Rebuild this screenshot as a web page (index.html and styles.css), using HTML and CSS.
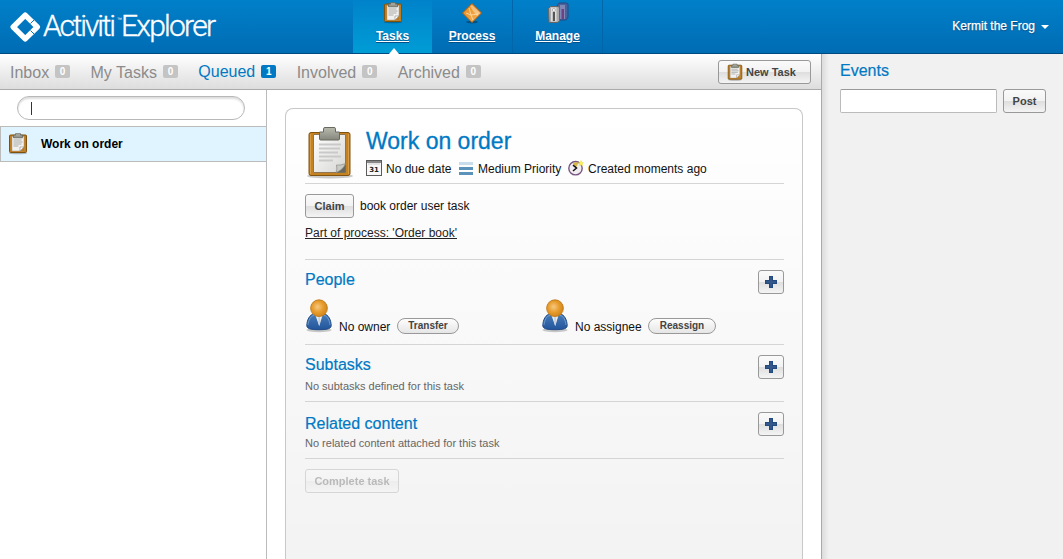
FILE: index.html
```html
<!DOCTYPE html>
<html lang="en">
<head>
<meta charset="utf-8">
<title>Activiti Explorer</title>
<link rel="stylesheet" href="styles.css">
</head>
<body>
<svg class="defs" width="0" height="0" aria-hidden="true">
  <defs>
    <linearGradient id="paper" x1="0" y1="0" x2="1" y2="1"><stop offset="0" stop-color="#fff"/><stop offset="1" stop-color="#d6d6d3"/></linearGradient>
    <linearGradient id="metal" x1="0" y1="0" x2="0" y2="1"><stop offset="0" stop-color="#b9baae"/><stop offset="1" stop-color="#85877d"/></linearGradient>
    <radialGradient id="head" cx=".42" cy=".42" r=".6"><stop offset="0" stop-color="#f7c882"/><stop offset=".55" stop-color="#e79c2c"/><stop offset="1" stop-color="#d0851b"/></radialGradient>
    <linearGradient id="suit" x1="0" y1="0" x2="0" y2="1"><stop offset="0" stop-color="#477db9"/><stop offset="1" stop-color="#23549b"/></linearGradient>
    <linearGradient id="gold" x1="0" y1="0" x2="1" y2="1"><stop offset="0" stop-color="#e98a16"/><stop offset="1" stop-color="#f4b45e"/></linearGradient>
    <symbol id="board" viewBox="0 0 20 22">
      <ellipse cx="10" cy="20.800" rx="9" ry="1" fill="#000" opacity=".25"/>
      <rect x="1.500" y="2.500" width="17" height="17.500" rx="1" fill="#c17d1d" stroke="#80510b"/>
      <path d="M4 4h12v14.500H4z" fill="#f1f1ef" stroke="#a49d90" stroke-width=".5"/>
      <path d="M5.500 7.500h8M5.500 9.500h9M5.500 11.500h8M5.500 13.500h5" stroke="#aaa" stroke-width="1"/>
      <path d="M16 14.500h-4v4z" fill="#fff" stroke="#888" stroke-width=".6"/><path d="M12.300 18.500h3.700v-3.700z" fill="#b87a22"/>
      <path d="M5.500 5.300V2.600h2V1.200h5v1.400h2v2.700z" fill="url(#metal)" stroke="#62645c" stroke-width=".8"/>
    </symbol>
    <symbol id="person" viewBox="0 0 26 34">
      <ellipse cx="13" cy="31" rx="12.500" ry="2.200" fill="#000" opacity=".2"/>
      <path d="M.8 26.500C1 21 3.500 15.500 8 15h10c4.500.5 7 6 7.200 11.500 0 3-3.200 4.200-12.200 4.200S.8 29.500.8 26.500z" fill="url(#suit)" stroke="#204a87" stroke-width="1"/>
      <path d="M2 26c.4-4.500 2.500-9 6-9.700M24 26c-.4-4.500-2.500-9-6-9.700" fill="none" stroke="#7da4d2" stroke-width=".8"/>
      <path d="M9.500 16.500h7L13.200 27z" fill="#e9edf2"/><path d="M12.300 18h1.500l.5 5-1.100 4-1-4z" fill="#c6cfdb"/>
      <circle cx="13" cy="9.200" r="8.400" fill="url(#head)" stroke="#bc7514" stroke-width=".8"/>
    </symbol>
    <symbol id="plus" viewBox="0 0 12 12"><path d="M4 0h4v4h4v4H8v4H4V8H0V4h4z" fill="#234a80"/><path d="M5 1h2v4h4v2H7v4H5V7H1V5h4z" fill="#34578a"/></symbol>
  </defs>
</svg>

<header class="header">
  <svg class="logo" width="222" height="53" viewBox="0 0 222 53">
    <path d="M25.200 15.100L37.300 27 25.200 38.900 13.200 27z" fill="none" stroke="#fff" stroke-width="5.400" stroke-linejoin="round"/>
    <path d="M30.500 23.500l3.500-3.500M30.500 30.500l3.500 3.500" stroke="#0077c0" stroke-width="1"/>
    <text class="logo-text" x="43" y="36" textLength="73">Activiti</text>
    <text class="logo-tm" x="117" y="21">™</text>
    <text class="logo-text" x="121" y="36" textLength="95">Explorer</text>
  </svg>
  <nav class="nav">
    <a class="nav-item active">
      <svg width="20" height="23" class="nav-icon"><use href="#board"/></svg><span>Tasks</span>
    </a>
    <a class="nav-item process">
      <svg class="nav-icon" width="22" height="23" viewBox="0 0 22 23"><ellipse cx="11" cy="21" rx="6" ry="1.500" opacity=".3"/><path d="M11 2.500L20.500 12 11 21.500 1.500 12z" fill="url(#gold)" stroke="#b85b09"/><path d="M11 4l8 8-3 3-4-5-3-5z" fill="#fff" opacity=".35"/><path d="M8 7l2 7-5-2M10 14l7-1M10 14l2 5" fill="none" stroke="#fce0ad" stroke-width=".8"/></svg><span>Process</span>
    </a>
    <a class="nav-item manage">
      <svg class="nav-icon" width="22" height="23" viewBox="0 0 22 23"><path d="M10 5l2-3h7l2 1v13l-2 3h-8z" fill="#48639c" stroke="#2d477f"/><path d="M13 4h5v14h-5z" fill="#8088b8"/><path d="M14.500 8h2.500v10h-2.500z" fill="#6d427f"/><path d="M1.500 7.500l2-2h7.500l1.500 1v13l-1.500 2h-9z" fill="#aaa" stroke="#666"/><path d="M4 6.500h5.500v14H4z" fill="#dedede"/><path d="M5.800 11h2.200v9H5.800z" fill="#555"/><circle cx="6.900" cy="9" r="1.500" fill="#fff" stroke="#888" stroke-width=".6"/></svg><span>Manage</span>
    </a>
  </nav>
  <div class="user">Kermit the Frog<i class="caret"></i></div>
</header>

<div class="page">
  <main class="main">
    <div class="toolbar">
      <div class="tab">Inbox<b>0</b></div>
      <div class="tab">My Tasks<b>0</b></div>
      <div class="tab selected">Queued<b>1</b></div>
      <div class="tab">Involved<b>0</b></div>
      <div class="tab">Archived<b>0</b></div>
      <button class="btn new-task"><svg width="16" height="18"><use href="#board"/></svg>New Task</button>
    </div>
    <div class="columns">
      <aside class="list">
        <div class="search"><i></i></div>
        <div class="list-row"><svg width="20" height="23"><use href="#board"/></svg><span>Work on order</span></div>
      </aside>
      <section class="content">
        <article class="panel">
          <div class="task-head">
            <svg class="big-board" width="48" height="52" viewBox="0 0 48 52">
              <ellipse cx="24" cy="49" rx="23" ry="2.500" fill="#000" opacity=".2"/>
              <rect x="3" y="5.500" width="41" height="43" rx="2" fill="#c58223" stroke="#80530f"/>
              <path d="M4.500 7v40M42.500 7v40" stroke="#d99c45" stroke-width="1"/>
              <path d="M7.500 7.500h32v38h-32z" fill="#fff" stroke="#8d7651"/>
              <path d="M8 8h31v37H8z" fill="url(#paper)"/>
              <path d="M13 17.500h22M13 21.500h21M13 25.500h19M13 29.500h22M13 33.500h14" stroke="#c9c9c9" stroke-width="2"/>
              <path d="M39.500 36.500v9h-9z" fill="#66685f"/><path d="M30 45.500q1.500-3 .5-7.500 4 .8 9-1.500-2 6-9.500 9z" fill="#c9cac5" stroke="#8a8b84" stroke-width=".7"/>
              <path d="M13.500 12V5h4V1.800q0-1.300 1.500-1.300h9q1.500 0 1.500 1.300V5h4v7q0 1-1.500 1H15q-1.500 0-1.500-1z" fill="url(#metal)" stroke="#686a61"/>
            </svg>
            <div class="task-info">
              <h1>Work on order</h1>
              <div class="meta">
                <svg width="16" height="16" viewBox="0 0 16 16"><rect x=".5" y=".5" width="15" height="15" fill="#f8f8f8" stroke="#5b5b5b"/><path d="M1 2h14" stroke="#888" stroke-width="2"/><path d="M2 4h12" stroke="#ccc"/><text x="8" y="12" text-anchor="middle" class="cal-text">31</text></svg><span class="due">No due date</span>
                <svg width="14" height="13" viewBox="0 0 14 13"><path fill="#c8dcea" d="M0 0h14v3H0z"/><path fill="#5b92ba" d="M0 5h14v3H0zM0 10h14v3H0z"/></svg><span class="priority">Medium Priority</span>
                <svg width="16" height="16" viewBox="0 0 16 16"><circle cx="7.500" cy="8.200" r="6.700" fill="#f1edf1" stroke="#765683" stroke-width="1.400"/><path d="M7.500 8.200L5 3q3-1.500 5.500 0z" fill="#d6b647"/><path d="M5 5.200l3.500 2.800L5 11" fill="none" stroke="#111" stroke-width="1.500"/><path d="M13 .5l.8 1.700 1.700.5-1.300 1.200.3 1.800L13 4.800l-1.700.9.3-1.800-1.200-1.200 1.800-.3z" fill="#fff250" stroke="#e9dc4b" stroke-width=".5"/></svg><span class="created">Created moments ago</span>
              </div>
            </div>
          </div>
          <div class="description">
            <div class="claim"><button class="btn">Claim</button><span>book order user task</span></div>
            <a class="process-link">Part of process: 'Order book'</a>
          </div>
          <section class="section people">
            <div class="section-title"><h2>People</h2><button class="btn add"><svg width="12" height="12"><use href="#plus"/></svg></button></div>
            <div class="people-row">
              <div class="person"><svg width="28" height="34"><use href="#person"/></svg><span>No owner</span><button class="pill">Transfer</button></div>
              <div class="person"><svg width="28" height="34"><use href="#person"/></svg><span class="assignee">No assignee</span><button class="pill wide">Reassign</button></div>
            </div>
          </section>
          <section class="section subtasks">
            <div class="section-title"><h2>Subtasks</h2><button class="btn add"><svg width="12" height="12"><use href="#plus"/></svg></button></div>
            <p>No subtasks defined for this task</p>
          </section>
          <section class="section related">
            <div class="section-title"><h2>Related content</h2><button class="btn add"><svg width="12" height="12"><use href="#plus"/></svg></button></div>
            <p>No related content attached for this task</p>
          </section>
          <button class="btn complete">Complete task</button>
        </article>
      </section>
    </div>
  </main>
  <aside class="events">
    <h2>Events</h2>
    <div class="event-form"><input type="text" aria-label="Event"><button class="btn post">Post</button></div>
  </aside>
</div>
</body>
</html>
```
FILE: styles.css
```css
* { box-sizing: border-box; }
html, body { height: 100%; }
body {
  margin: 0; height: 559px; overflow: hidden; display: flex; flex-direction: column;
  font: 12px/16px "Liberation Sans", Arial, sans-serif; color: #111; background: #fff;
}
svg { display: block; flex: none; }
.defs { position: absolute; }
h1, h2, p { margin: 0; font-weight: normal; }
h1, h2 { color: #0079c4; }
button { font-family: inherit; }

.header {
  display: flex; height: 54px; flex: none;
  background: linear-gradient(#0080c9, #006cb4); border-bottom: 1px solid #004a80;
}
.logo { width: 222px; margin-right: 131px; }
.logo-text { font: 300 30px Roboto, "Liberation Sans", sans-serif; fill: #fff; stroke: #fff; stroke-width: .35px; }
.logo-tm { font: 5px "Liberation Sans", sans-serif; fill: #fff; }
.nav { display: flex; color: #fff; font-weight: bold; }
.nav-item {
  display: flex; flex-direction: column; align-items: center; height: 53px; width: 81px;
  padding: 1px 0 0; border-right: 1px solid #0065a9; line-height: 15px; text-decoration: underline;
  text-shadow: 0 1px 1px #00508a;
}
.nav-icon { margin-bottom: 5px; }
.nav-item.active { width: 79px; border: 0; background: linear-gradient(#0082ca, #009dd6); position: relative; }
.nav-item.active::after {
  content: ""; position: absolute; left: 36px; bottom: -1px; border: 5px solid transparent;
  border-top: 0; border-bottom: 6px solid #fff;
}
.nav-item.manage { width: 90px; }
.user {
  display: flex; align-items: center; gap: 6px; margin-left: auto; padding-right: 14px; height: 52px;
  color: #fff; text-shadow: 0 1px 1px #003e70; -webkit-text-stroke: .25px #fff;
}
.caret { border: 4px solid transparent; border-top-color: #fff; border-bottom: 0; margin-top: 2px; }

.page { display: flex; flex: 1; min-height: 0; }
.main { width: 821px; display: flex; flex-direction: column; }
.toolbar {
  height: 36px; flex: none; display: flex; align-items: center; padding: 0 10px;
  background: linear-gradient(#fff, #ddd); border-bottom: 1px solid #aaa;
}
.tab { display: flex; align-items: center; margin-right: 20.4px; color: #8b8b8b; font-size: 16px; line-height: 20px; padding-top: 2px; }
.tab b {
  width: 15px; height: 13px; margin-left: 6px; border-radius: 2px; background: #c4c4c4;
  color: #fff; font-size: 10px; line-height: 13px; text-align: center; margin-top: -2px;
}
.tab.selected { color: #0079c4; padding: 0; }
.selected b { background: #0079c4; margin-top: 0; }
.btn {
  display: inline-flex; align-items: center; justify-content: center; height: 24px; padding: 0 8px;
  border: 1px solid #999; border-radius: 3px; color: #444; font-size: 11px; font-weight: bold;
  background: linear-gradient(#fafafa 0%, #f2f2f2 50%, #dedede 51%, #f4f4f4 100%);
}
.new-task { width: 93px; gap: 3px; margin-left: auto; padding: 0 6px 0 0; }

.columns { display: flex; flex: 1; min-height: 0; }
.list { width: 267px; border-right: 1px solid #bbb; padding-top: 6px; }
.search {
  width: 228px; height: 24px; margin: 0 0 6px 17px; padding: 5px 13px; border: 1px solid #b8b8b8;
  border-radius: 12px; box-shadow: inset 0 2px 2px #ddd;
}
.search i { display: block; width: 1px; height: 13px; background: #333; }
.list-row {
  height: 36px; display: flex; align-items: center; gap: 13px; padding-left: 7px;
  border: 1px solid #bbb; border-right: 0; background: #dff4ff; color: #000; font-weight: bold;
}
.list-row svg { margin-top: -1px; }
.content { flex: 1; padding: 18px 18px 0; display: flex; }
.panel {
  width: 518px; padding: 18px 18px 0 19px; border: 1px solid #c8c8c8; border-bottom: 0; border-radius: 8px 8px 0 0;
  background: linear-gradient(#fff, #f3f3f3 430px);
}
.task-head { display: flex; height: 57px; border-bottom: 1px solid #d5d5d5; }
.big-board { margin-left: 1px; }
.task-info { margin-left: 12px; }
h1 { font-size: 23px; line-height: 28px; -webkit-text-stroke: .3px #0079c4; }
.meta { display: flex; align-items: center; margin-top: 4px; height: 18px; white-space: nowrap; }
.meta span { margin-left: 4px; padding-top: 2px; }
.meta .due { width: 65px; margin-right: 8px; }
.meta .priority { width: 84px; margin-right: 6px; margin-left: 5px; }
.cal-text { font: bold 7px "DejaVu Sans", sans-serif; fill: #222; }
.description { height: 76px; padding-top: 10px; border-bottom: 1px solid #d5d5d5; }
.claim { display: flex; align-items: center; gap: 6px; margin-bottom: 7px; }
.claim .btn { width: 49px; }
.process-link { text-decoration: underline; color: #222; }

.section { border-bottom: 1px solid #d5d5d5; padding-top: 10px; }
.section-title { display: flex; justify-content: space-between; height: 18px; }
h2 { font-size: 16px; line-height: 20px; -webkit-text-stroke: .2px #0079c4; }
.add { width: 26px; padding: 0; }
.people { height: 85px; }
.subtasks, .related { height: 57px; }
.people-row { display: flex; padding-top: 12px; }
.person { width: 236px; display: flex; align-items: flex-end; height: 34px; }
.person > svg { margin-bottom: 1px; }
.person span { margin-left: 6px; width: 52px; white-space: nowrap; line-height: 14px; }
.person .assignee { width: 67px; }
.pill {
  width: 62px; height: 16px; margin: 0 0 0 6px; padding: 0; border: 1px solid #999; border-radius: 8px;
  background: linear-gradient(#fdfdfd, #e6e6e6); color: #444; font-size: 10px; line-height: 12px; font-weight: bold;
}
.pill.wide { width: 68px; }
.section p { color: #666; font-size: 11px; line-height: 14px; margin-top: 6px; }
.related .section-title h2 { padding-top: 2px; }
.complete { width: 94px; margin-top: 10px; padding: 0; opacity: .33; }

.events {
  flex: 1; padding: 7px 17px 0 18px; border-left: 1px solid #aaa;
  background: linear-gradient(90deg, #dcdcdc, #f1f1f1 7px);
}
.event-form { display: flex; align-items: center; gap: 6px; margin-top: 8px; }
.event-form input { width: 157px; height: 24px; border: 1px solid #bbb; border-top-color: #999; border-radius: 2px; background: #fff; }
.post { width: 43px; padding: 0; }
```
